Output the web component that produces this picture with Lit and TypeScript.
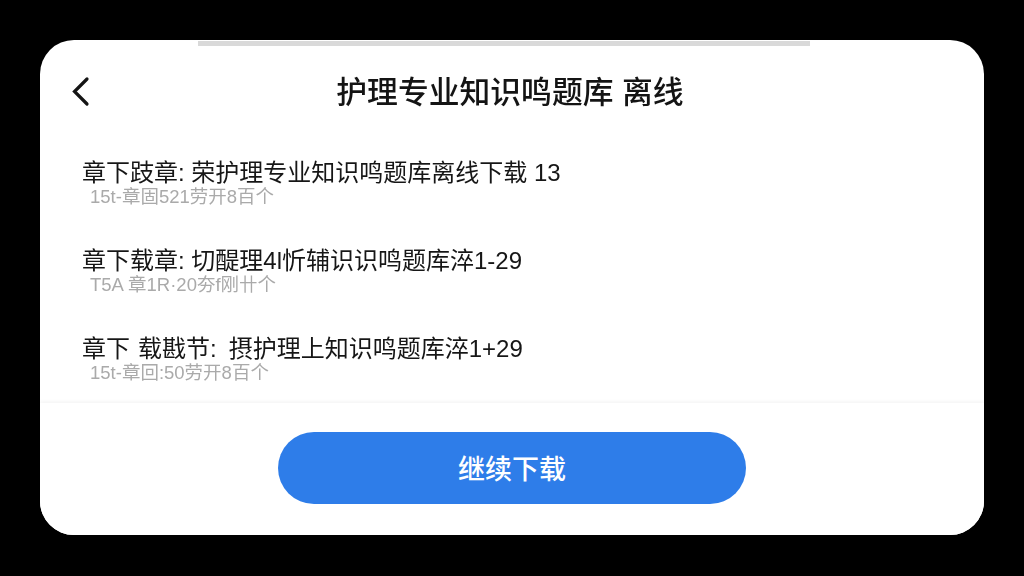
import { LitElement, html, css, type CSSResultGroup } from "lit";
import { customElement } from "lit/decorators.js";

const chapters = [
  { title: "章下跂章: 荣护理专业知识鸣题库离线下载 13", meta: "15t-章固521劳开8百个" },
  { title: "章下载章: 切醍理4l忻辅识识鸣题库淬1-29", meta: "T5A 章1R·20夯f刚卄个" },
  { title: "章下\u2004载戡节:\u2002摂护理上知识鸣题库淬1+29", meta: "15t-章回:50劳开8百个" },
];

@customElement("app-root")
export class AppRoot extends LitElement {
  protected render() {
    return html`
      <div class="card">
        <div class="grabber"></div>
        <header class="header">
          <svg class="back" width="20" height="32" viewBox="0 0 20 32" fill="none">
            <path d="M16 3 L3.5 15.5 L16 28" stroke="#141414" stroke-width="3.2" stroke-linecap="round" />
          </svg>
          <h1 class="title">护理专业知识鸣题库 离线</h1>
        </header>
        <div class="list">
          ${chapters.map(
            (c) => html`
              <div class="row">
                <div class="row-title">${c.title}</div>
                <div class="row-meta">${c.meta}</div>
              </div>
            `,
          )}
        </div>
        <footer class="footer">
          <button class="download">继续下载</button>
        </footer>
      </div>
    `;
  }

  static get styles(): CSSResultGroup {
    return css`
      :host {
        display: block;
        height: 576px;
        padding: 40px 40px 41px;
        box-sizing: border-box;
        background: #000;
        font-family: "Liberation Sans", "Noto Sans CJK SC", sans-serif;
      }
      .card {
        height: 495px;
        background: #fff;
        border-radius: 34px;
        overflow: hidden;
        display: flex;
        flex-direction: column;
      }
      .grabber {
        flex: none;
        width: 612px;
        height: 5px;
        margin: 1px 0 0 158px;
        background: #d9d9d9;
      }
      .header {
        flex: none;
        position: relative;
        display: flex;
        align-items: center;
        justify-content: center;
        height: 92px;
        padding: 2px 4px 0 0;
        box-sizing: border-box;
      }
      .back {
        position: absolute;
        left: 31px;
        top: 30px;
      }
      .title {
        margin: 0;
        font-size: 30.8px;
        font-weight: 500;
        line-height: 40px;
        color: #141414;
        filter: blur(0.4px);
      }
      .list {
        flex: 1;
        display: flex;
        flex-direction: column;
        gap: 33px;
        padding: 19px 0 0 42px;
      }
      .row {
        height: 55px;
      }
      .row-title {
        font-size: 24px;
        line-height: 32px;
        color: #161616;
        white-space: nowrap;
        filter: blur(0.4px);
      }
      .row-meta {
        margin: -5px 0 0 8px;
        font-size: 18.5px;
        line-height: 26px;
        color: #aaa;
        white-space: nowrap;
        filter: blur(0.6px);
      }
      .footer {
        flex: none;
        height: 132px;
        box-sizing: border-box;
        display: flex;
        justify-content: center;
        padding: 29px 0 0 0;
        background: #fff;
        box-shadow: 0 -2px 3px rgba(0, 0, 0, 0.04);
      }
      .download {
        width: 468px;
        height: 72px;
        padding: 0 0 1px;
        border: none;
        border-radius: 36px;
        background: #2e7de9;
        color: #fff;
        font: inherit;
        font-size: 27px;
        font-weight: 500;
      }
    `;
  }
}
